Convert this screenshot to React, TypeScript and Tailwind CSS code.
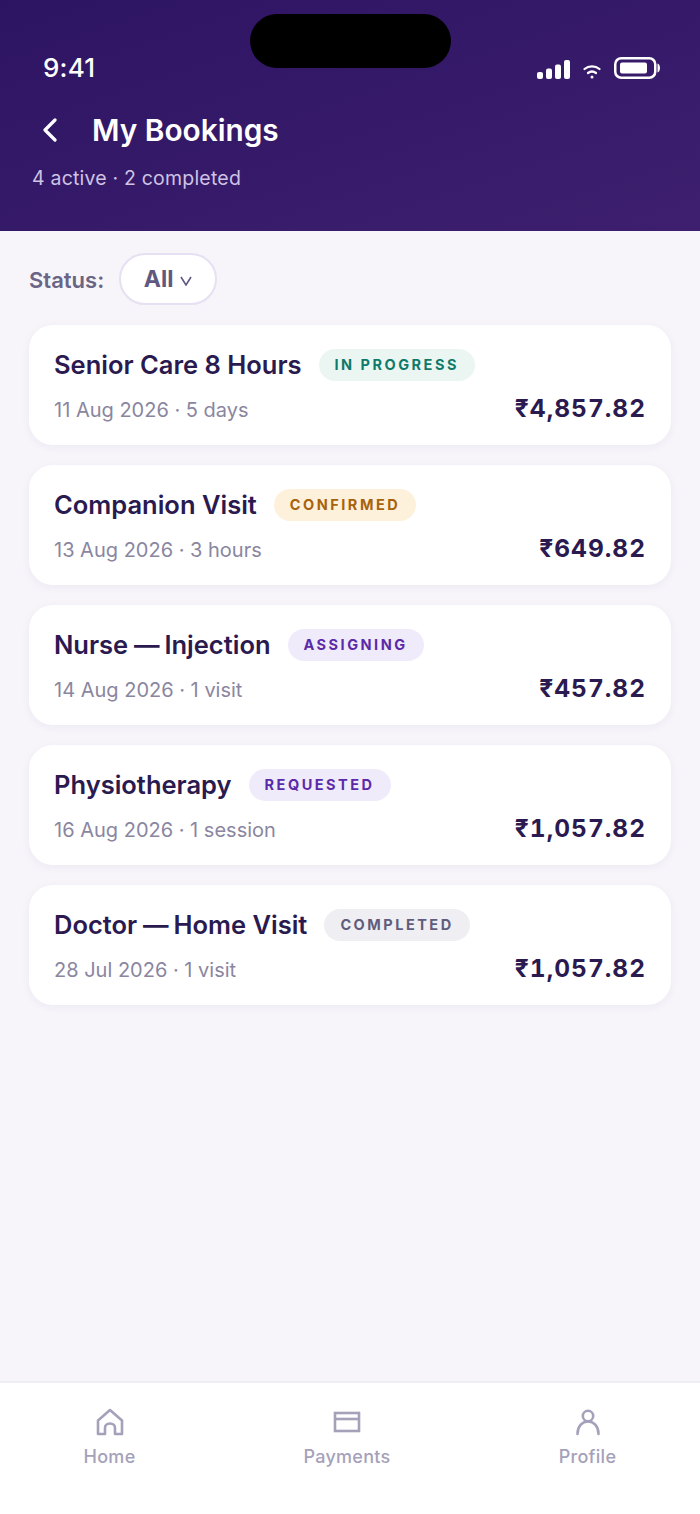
import { ReactNode } from 'react';

type Booking = {
  title: string;
  meta: string;
  price: string;
  status: string;
  badge: string;
};

const bookings: Booking[] = [
  { title: 'Senior Care 8 Hours', meta: '11 Aug 2026 · 5 days', price: '₹4,857.82', status: 'IN PROGRESS', badge: 'bg-[#ebf6f2] text-[#0f7a6a]' },
  { title: 'Companion Visit', meta: '13 Aug 2026 · 3 hours', price: '₹649.82', status: 'CONFIRMED', badge: 'bg-[#fdf1dc] text-[#a8620c]' },
  { title: 'Nurse — Injection', meta: '14 Aug 2026 · 1 visit', price: '₹457.82', status: 'ASSIGNING', badge: 'bg-[#f0ebfb] text-[#5b2aa8]' },
  { title: 'Physiotherapy', meta: '16 Aug 2026 · 1 session', price: '₹1,057.82', status: 'REQUESTED', badge: 'bg-[#f0ebfb] text-[#5b2aa8]' },
  { title: 'Doctor — Home Visit', meta: '28 Jul 2026 · 1 visit', price: '₹1,057.82', status: 'COMPLETED', badge: 'bg-[#efeef3] text-[#625c7c]' },
];

function StatusIcons() {
  return (
    <div className="flex items-center gap-[13px]">
      {/* signal */}
      <svg width="33" height="19" viewBox="0 0 33 19" fill="white" className="mt-[2px]">
        <rect x="0" y="12" width="6" height="7" rx="2" />
        <rect x="9" y="8.5" width="6" height="10.5" rx="2" />
        <rect x="18" y="4.5" width="6" height="14.5" rx="2" />
        <rect x="27" y="0" width="6" height="19" rx="2" />
      </svg>
      {/* wifi */}
      <svg width="18" height="15" viewBox="0 0 18 15" fill="none" stroke="white" strokeWidth="2.2" strokeLinecap="round" className="mt-[6px]">
        <path d="M1.5 5C5.8 1.4 12.2 1.4 16.5 5" />
        <path d="M5 9C7.4 7.2 10.6 7.2 13 9" />
        <circle cx="9" cy="13" r="1.5" fill="white" stroke="none" />
      </svg>
      {/* battery */}
      <svg width="46" height="22" viewBox="0 0 46 22" fill="none">
        <rect x="1.25" y="1.25" width="40" height="19.5" rx="6" stroke="white" strokeWidth="2.5" />
        <rect x="6" y="5.5" width="27" height="11" rx="2" fill="white" />
        <path d="M43.5 6.5C45 7 46 8.8 46 11C46 13.2 45 15 43.5 15.5Z" fill="white" />
      </svg>
    </div>
  );
}

function Title({ text }: { text: string }) {
  // the dash sits a little tighter in the design
  const parts = text.split(' — ');
  return (
    <span className="text-[25.5px] leading-[32px] font-semibold whitespace-pre text-[#2a1a50]">
      {parts[0]}
      {parts[1] !== undefined && <span className="tracking-[-0.7px]"> — </span>}
      {parts[1]}
    </span>
  );
}

function Card({ b }: { b: Booking }) {
  return (
    <div className="flex h-[120px] flex-col rounded-[24px] bg-white px-[25px] pt-[24px] shadow-[0_2px_10px_rgba(45,20,96,0.05)]">
      <div className="flex items-center gap-[17px]">
        <Title text={b.title} />
        <span className={`flex h-[32px] items-center rounded-full px-[16px] text-[14.5px] font-bold tracking-[2.5px] ${b.badge}`}>
          {b.status}
        </span>
      </div>
      <div className="mt-[14px] flex items-center justify-between">
        <span className="relative top-[1px] text-[20px] leading-[28px] text-[#8a86a0]">{b.meta}</span>
        <span className="relative -top-[1px] text-[24.5px] leading-[28px] font-bold tracking-[1px] tabular-nums text-[#2a1a50]">{b.price}</span>
      </div>
    </div>
  );
}

function Tab({ label, icon, className }: { label: string; icon: ReactNode; className: string }) {
  return (
    <div className={`flex flex-col items-center ${className}`}>
      {icon}
      <span className="mt-[9px] text-[18px] leading-[24px] font-medium tracking-[0.3px] text-[#a5a1ba]">{label}</span>
    </div>
  );
}

export default function App() {
  return (
    <div className="flex h-[1514px] w-[700px] flex-col overflow-hidden bg-[#f7f5fa] font-['Inter',sans-serif]">
      {/* header */}
      <div className="relative h-[231px] shrink-0 bg-gradient-to-br from-[#2d1463] to-[#3e1f6f] px-[33px]">
        <div className="absolute top-[14px] left-[250px] h-[54px] w-[201px] rounded-full bg-black" />
        <div className="flex items-center justify-between pt-[52px] pl-[10px] pr-[7px]">
          <span className="text-[26px] leading-[32px] font-medium tracking-[0.2px] text-white">9:41</span>
          <StatusIcons />
        </div>
        <div className="mt-[26px] flex items-center pl-[10px]">
          <svg width="14" height="24" viewBox="0 0 14 24" fill="none" stroke="white" strokeWidth="3.2" strokeLinecap="round" strokeLinejoin="round">
            <path d="M12 2L2 12L12 22" />
          </svg>
          <span className="ml-[35px] text-[29.8px] leading-[40px] font-semibold text-white">My Bookings</span>
        </div>
        <div className="mt-[14px] -ml-[1px] text-[19.5px] leading-[28px] tracking-[0.2px] text-[#cfc3e4]">4 active · 2 completed</div>
      </div>

      {/* filter */}
      <div className="flex items-center gap-[15px] px-[29px] pt-[22px]">
        <span className="relative top-[1px] text-[22px] font-semibold text-[#6a6485]">Status:</span>
        <div className="flex h-[52px] w-[98px] items-center justify-center gap-[7px] rounded-full border-2 border-[#e6e0f2] bg-white text-[#5f5880]">
          <span className="text-[23px] font-bold">All</span>
          <svg width="12" height="10" viewBox="0 0 12 10" fill="none" stroke="currentColor" strokeWidth="1.6" className="mt-[3px]">
            <path d="M1 1L6 9L11 1" />
          </svg>
        </div>
      </div>

      {/* bookings */}
      <div className="mt-[20px] flex flex-1 flex-col gap-[20px] px-[29px]">
        {bookings.map((b) => (
          <Card key={b.title} b={b} />
        ))}
      </div>

      {/* bottom nav */}
      <div className="flex h-[133px] shrink-0 border-t-2 border-[#f0eef5] bg-white pt-[25px]">
        <Tab
          label="Home"
          className="w-[219px]"
          icon={
            <svg width="28" height="28" viewBox="0 0 28 28" fill="none" stroke="#a5a1ba" strokeWidth="2.6" strokeLinejoin="round">
              <path d="M2 12.5L14 2L26 12.5V26H19V20C19 17.5 17 15.5 14 15.5C11 15.5 9 17.5 9 20V26H2V12.5Z" />
            </svg>
          }
        />
        <Tab
          label="Payments"
          className="w-[256px]"
          icon={
            <svg width="28" height="28" viewBox="0 0 28 28" fill="none" stroke="#a5a1ba" strokeWidth="2.6" className="translate-y-[1px]">
              <rect x="2" y="4" width="24" height="18" />
              <path d="M2 10H26" />
            </svg>
          }
        />
        <Tab
          label="Profile"
          className="w-[225px]"
          icon={
            <svg width="28" height="28" viewBox="0 0 28 28" fill="none" stroke="#a5a1ba" strokeWidth="2.6" strokeLinecap="round">
              <circle cx="14" cy="8" r="5.2" />
              <path d="M3.5 26C3.5 18.5 8 13.5 14 13.5C20 13.5 24.5 18.5 24.5 26" />
            </svg>
          }
        />
      </div>
    </div>
  );
}
